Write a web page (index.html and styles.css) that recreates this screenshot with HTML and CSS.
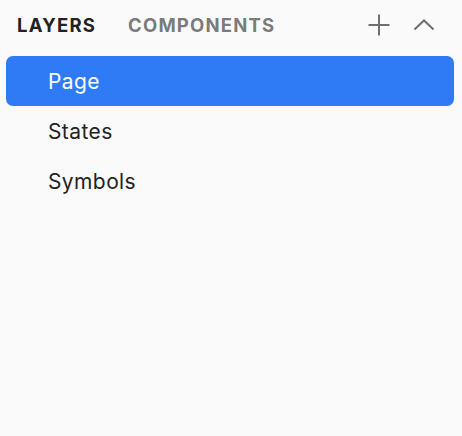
FILE: index.html
```html
<!DOCTYPE html>
<html>
<head>
<meta charset="utf-8">
<link rel="stylesheet" href="styles.css">
</head>
<body>
<div class="panel">
  <div class="header">
    <div class="tabs">
      <span class="tab active">LAYERS</span>
      <span class="tab">COMPONENTS</span>
    </div>
    <div class="actions">
      <svg class="icon plus" width="24" height="24" viewBox="0 0 24 24"><path d="M12 1.5V22.5M1.5 12H22.5" stroke="#6f6f6f" stroke-width="2" fill="none"/></svg>
      <svg class="icon chev" width="22" height="12" viewBox="0 0 22 12"><path d="M1.5 10.5L11 1.5L20.5 10.5" stroke="#6f6f6f" stroke-width="2" fill="none"/></svg>
    </div>
  </div>
  <ul class="list">
    <li class="item selected">Page</li>
    <li class="item">States</li>
    <li class="item">Symbols</li>
  </ul>
</div>
</body>
</html>
```
FILE: styles.css
```css
html, body { margin: 0; padding: 0; background: #fafafa; }
body { font-family: Inter, "Noto Sans", sans-serif; width: 462px; height: 436px; overflow: hidden; }
.panel { display: flex; flex-direction: column; }
.header { display: flex; align-items: center; justify-content: space-between; height: 50px; padding: 0 27px 0 17px; }
.tabs { display: flex; gap: 32px; }
.tab { font-size: 18.5px; font-weight: 700; letter-spacing: 1.2px; color: #7b7b7b; }
.tab.active { color: #222; }
.actions { display: flex; align-items: center; gap: 22px; }
.icon { display: block; }
.list { list-style: none; margin: 6px 8px 0 6px; padding: 0; }
.item { height: 50px; display: flex; align-items: center; padding-left: 42px; font-size: 21px; letter-spacing: 0.4px; color: #222; }
.item.selected { background: #2f7bf5; color: #fff; border-radius: 7px; }
```
